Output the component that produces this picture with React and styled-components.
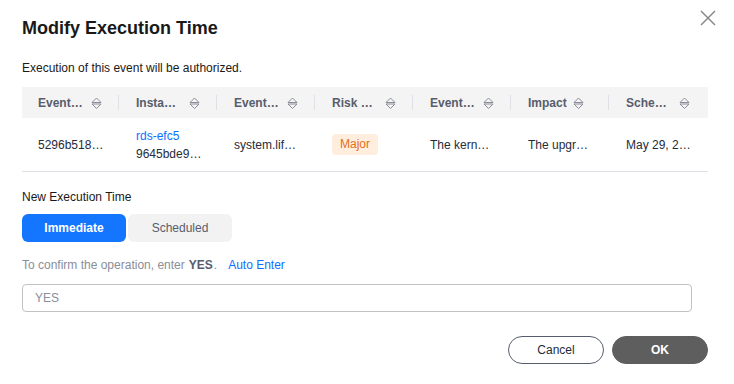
import React from "react";
import styled, { createGlobalStyle } from "styled-components";

const Global = createGlobalStyle`
  html, body { margin: 0; padding: 0; background: #ffffff; }
  body { font-family: "Liberation Sans", Arial, sans-serif; }
  * { box-sizing: border-box; }
`;

const Dialog = styled.div`
  width: 734px;
  height: 384px;
  position: relative;
  padding: 16px 26px 0 22px;
  background: #fff;
  color: #252b3a;
`;

const Title = styled.h1`
  margin: 0;
  font-size: 18px;
  line-height: 24px;
  font-weight: 700;
  color: #191919;
`;

const Close = styled.button`
  position: absolute;
  top: 10px;
  right: 18px;
  width: 16px;
  height: 16px;
  padding: 0;
  border: 0;
  background: none;
  cursor: pointer;
  display: flex;
`;

const Desc = styled.p`
  margin: 19px 0 0;
  font-size: 12px;
  line-height: 18px;
  color: #191919;
`;

const Table = styled.div`
  margin-top: 10px;
  width: 686px;
  display: grid;
  grid-template-columns: repeat(7, 98px);
`;

const HeadCell = styled.div`
  height: 31px;
  background: #f4f4f4;
  display: flex;
  align-items: center;
  padding-left: 16px;
  position: relative;
  font-size: 12px;
  font-weight: 700;
  color: #575d6c;
  &::after {
    content: "";
    display: ${(p) => (p.$last ? "none" : "block")};
    position: absolute;
    right: 1px;
    top: 8px;
    width: 1px;
    height: 15px;
    background: #dfe1e6;
  }
`;

const HeadText = styled.span`
  max-width: 47px;
  white-space: nowrap;
  overflow: hidden;
  text-overflow: ellipsis;
  margin-right: 6px;
`;

const Cell = styled.div`
  height: 54px;
  border-bottom: 1px solid #dfe1e6;
  display: flex;
  flex-direction: column;
  justify-content: center;
  padding-left: 16px;
  font-size: 12px;
  line-height: 18px;
  color: #252b3a;
`;

const Trunc = styled.span`
  display: block;
  max-width: 66px;
  white-space: nowrap;
  overflow: hidden;
  text-overflow: ellipsis;
  color: ${(p) => (p.$link ? "#0d6fff" : "inherit")};
`;

const Badge = styled.span`
  align-self: flex-start;
  background: #ffeedd;
  color: #e56e19;
  border-radius: 4px;
  padding: 0 8px;
  height: 21px;
  line-height: 21px;
  font-size: 12px;
`;

const Label = styled.div`
  margin-top: 17px;
  font-size: 12px;
  line-height: 16px;
  color: #191919;
`;

const Toggle = styled.div`
  margin-top: 9px;
  display: flex;
  gap: 2px;
`;

const ToggleBtn = styled.button`
  width: 104px;
  height: 28px;
  border: 0;
  border-radius: 6px;
  font-family: inherit;
  font-size: 12px;
  font-weight: ${(p) => (p.$active ? 700 : 400)};
  background: ${(p) => (p.$active ? "#1476ff" : "#f2f2f2")};
  color: ${(p) => (p.$active ? "#ffffff" : "#575d6c")};
  padding: 0;
`;

const Confirm = styled.div`
  margin-top: 15px;
  font-size: 12px;
  line-height: 16px;
  color: #8a8e99;
  display: flex;
  align-items: center;
`;

const Strong = styled.b`
  color: #575d6c;
  margin: 0 1px 0 4px;
`;

const AutoLink = styled.a`
  color: #0d6fff;
  margin-left: 11px;
  text-decoration: none;
`;

const Input = styled.input`
  display: block;
  margin-top: 11px;
  width: 670px;
  height: 28px;
  border: 1px solid #c2c2c2;
  border-radius: 4px;
  padding: 0 12px;
  font-family: inherit;
  font-size: 12px;
  outline: none;
  &::placeholder { color: #8a8e99; }
`;

const Footer = styled.div`
  margin-top: 24px;
  display: flex;
  justify-content: flex-end;
  gap: 8px;
`;

const Btn = styled.button`
  width: 96px;
  height: 28px;
  border-radius: 14px;
  font-family: inherit;
  font-size: 12px;
  padding: 0;
  border: 1px solid ${(p) => (p.$primary ? "#5e5e5e" : "#575d6c")};
  background: ${(p) => (p.$primary ? "#5e5e5e" : "#ffffff")};
  color: ${(p) => (p.$primary ? "#ffffff" : "#252b3a")};
  font-weight: ${(p) => (p.$primary ? 700 : 400)};
`;

const SortIcon = () => (
  <svg width="12" height="14" viewBox="0 0 12 14" fill="none">
    <path d="M1 6.5 L5.5 2 L10 6.5 Z" stroke="#8a8e99" strokeWidth="1" strokeLinejoin="round" />
    <path d="M1 8 L5.5 12.5 L10 8 Z" stroke="#8a8e99" strokeWidth="1" strokeLinejoin="round" />
  </svg>
);

const heads = ["Event ID", "Instance", "Event Name", "Risk Level", "Event Description", "Impact", "Scheduled Time"];

export default function App() {
  return (
    <>
      <Global />
      <Dialog>
        <Title>Modify Execution Time</Title>
        <Close aria-label="close">
          <svg width="16" height="16" viewBox="0 0 16 16">
            <path d="M1 1 L15 15 M15 1 L1 15" stroke="#8a8a8a" strokeWidth="1.5" />
          </svg>
        </Close>
        <Desc>Execution of this event will be authorized.</Desc>
        <Table>
          {heads.map((h, i) => (
            <HeadCell key={h} $last={i === heads.length - 1}>
              <HeadText>{h}</HeadText>
              <SortIcon />
            </HeadCell>
          ))}
          <Cell><Trunc>5296b518a7c4e</Trunc></Cell>
          <Cell>
            <Trunc $link>rds-efc5</Trunc>
            <Trunc>9645bde9f1a2c</Trunc>
          </Cell>
          <Cell><Trunc>system.lifecycle</Trunc></Cell>
          <Cell><Badge>Major</Badge></Cell>
          <Cell><Trunc>The kernel version</Trunc></Cell>
          <Cell><Trunc>The upgrade will</Trunc></Cell>
          <Cell><Trunc>May 29, 2024</Trunc></Cell>
        </Table>
        <Label>New Execution Time</Label>
        <Toggle>
          <ToggleBtn $active>Immediate</ToggleBtn>
          <ToggleBtn>Scheduled</ToggleBtn>
        </Toggle>
        <Confirm>
          To confirm the operation, enter<Strong>YES</Strong>.
          <AutoLink href="#">Auto Enter</AutoLink>
        </Confirm>
        <Input placeholder="YES" />
        <Footer>
          <Btn>Cancel</Btn>
          <Btn $primary>OK</Btn>
        </Footer>
      </Dialog>
    </>
  );
}
